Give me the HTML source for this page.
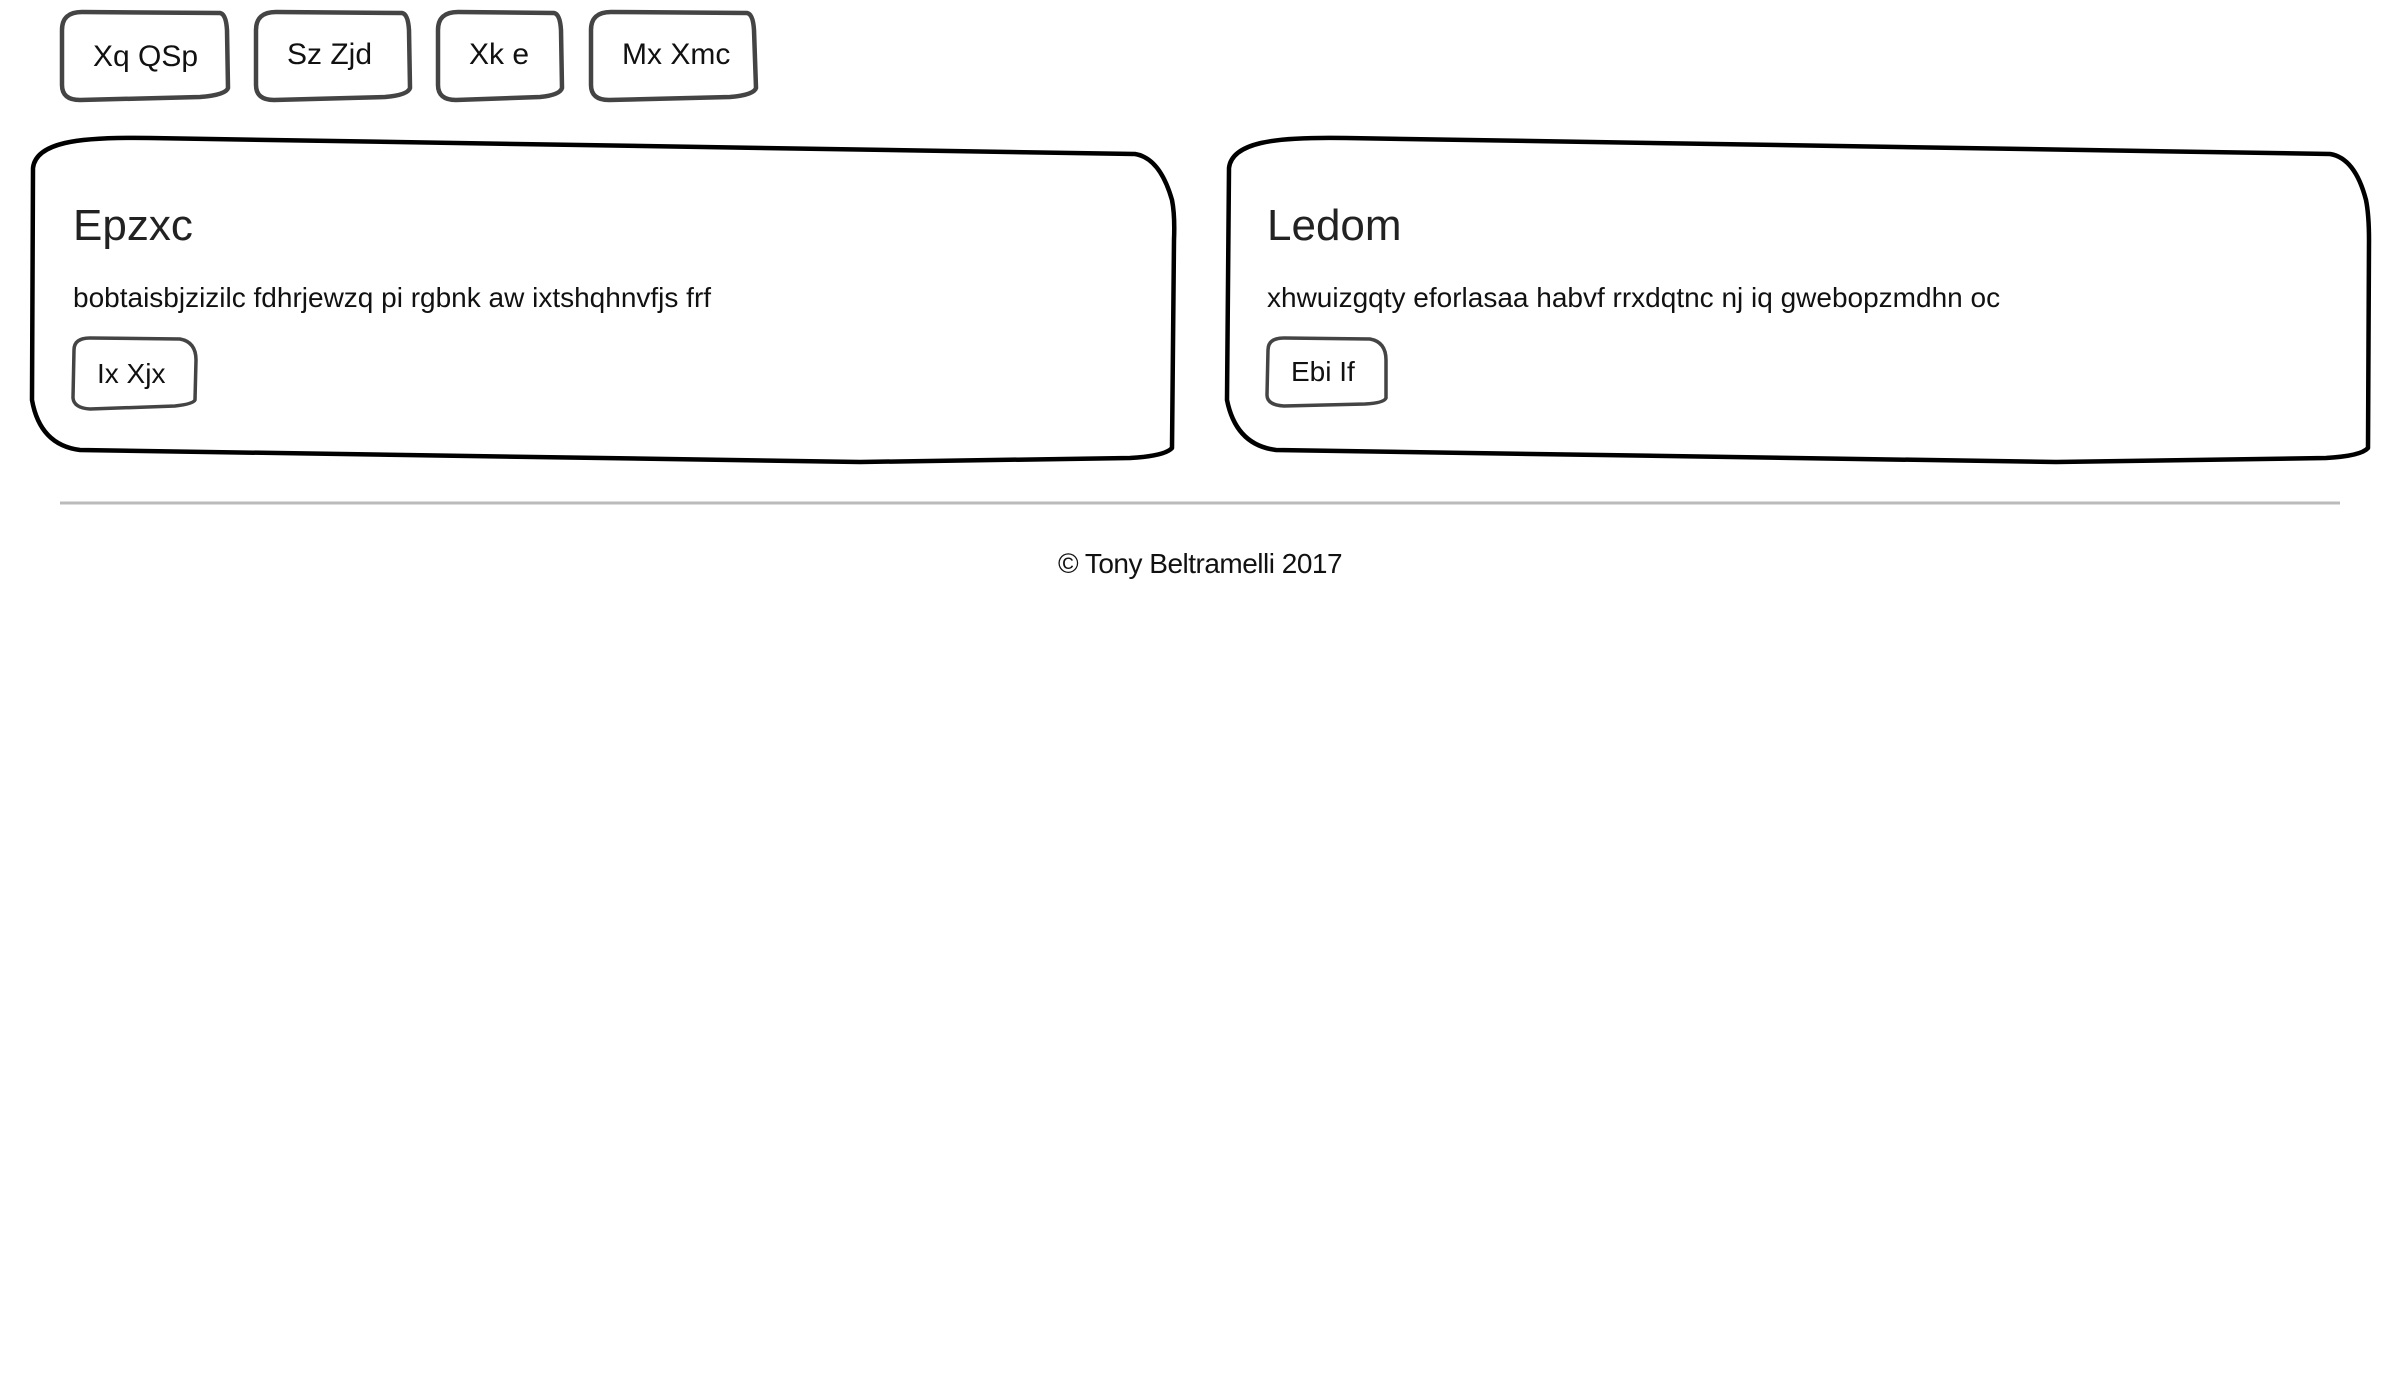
<!DOCTYPE html>
<html><head><meta charset="utf-8"><style>
html,body{margin:0;padding:0;background:#fff;width:2400px;height:1380px;overflow:hidden}
body{position:relative;font-family:"Liberation Sans",sans-serif;color:#111}
svg{position:absolute;left:0;top:0}
.t{position:absolute;white-space:nowrap;line-height:1}
</style></head><body>
<svg width="2400" height="1380" viewBox="0 0 2400 1380" fill="none">
<g stroke="#444" stroke-width="4.5" stroke-linejoin="round">
<path d="M62 30 Q62 12 82 12 L220 13 Q226 14 227 30 L228 88 Q226 95 200 97 L80 100 Q62 100 62 85 Z"/>
<path d="M256 30 Q256 12 276 12 L402 13 Q408 14 409 30 L410 88 Q408 95 385 97 L274 100 Q256 100 256 85 Z"/>
<path d="M438 30 Q438 12 458 12 L554 13 Q560 14 561 30 L562 88 Q560 95 540 97 L456 100 Q438 100 438 85 Z"/>
<path d="M591 30 Q591 12 611 12 L747 13 Q753 14 754 30 L756 88 Q754 95 730 97 L609 100 Q591 100 591 85 Z"/>
<path d="M74 350 Q74 338 90 338 L180 339 Q196 342 196 360 L195 400 Q193 404 175 406 L90 409 Q74 408 73 398 Z" stroke-width="3.5"/>
<path d="M1268 350 Q1268 338 1284 338 L1370 339 Q1386 342 1386 360 L1386 398 Q1384 403 1365 404 L1284 406 Q1267 405 1267 395 Z" stroke-width="3.5"/>
</g>
<g stroke="#000" stroke-width="4.5" stroke-linejoin="round">
<path d="M33 168 Q35 150 65 143 Q90 137 150 138 L1135 154 Q1160 158 1172 200 Q1175 215 1174 240 L1172 448 Q1165 456 1130 458 L860 462 L80 450 Q40 445 32 400 Z"/>
<path d="M1229 168 Q1231 150 1261 143 Q1286 137 1346 138 L2330 154 Q2355 158 2366 200 Q2369 215 2369 240 L2368 448 Q2361 456 2326 458 L2056 462 L1276 450 Q1236 445 1227 400 Z"/>
</g>
<line x1="60" y1="503" x2="2340" y2="503" stroke="#bbb" stroke-width="3"/>
</svg>
<div class="t" style="left:93px;top:42px;font-size:30px">Xq QSp</div>
<div class="t" style="left:287px;top:40px;font-size:30px">Sz Zjd</div>
<div class="t" style="left:469px;top:40px;font-size:30px">Xk e</div>
<div class="t" style="left:622px;top:40px;font-size:30px">Mx Xmc</div>

<div class="t" style="left:73px;top:204px;font-size:44px;color:#222">Epzxc</div>
<div class="t" style="left:73px;top:284px;font-size:28px">bobtaisbjzizilc fdhrjewzq pi rgbnk aw ixtshqhnvfjs frf</div>
<div class="t" style="left:97px;top:360px;font-size:28px">Ix Xjx</div>

<div class="t" style="left:1267px;top:204px;font-size:44px;color:#222">Ledom</div>
<div class="t" style="left:1267px;top:284px;font-size:28px">xhwuizgqty eforlasaa habvf rrxdqtnc nj iq gwebopzmdhn oc</div>
<div class="t" style="left:1291px;top:358px;font-size:28px">Ebi If</div>

<div class="t" style="left:1055px;top:550px;font-size:28px;width:290px;text-align:center;letter-spacing:-0.5px">© Tony Beltramelli 2017</div>
</body></html>
